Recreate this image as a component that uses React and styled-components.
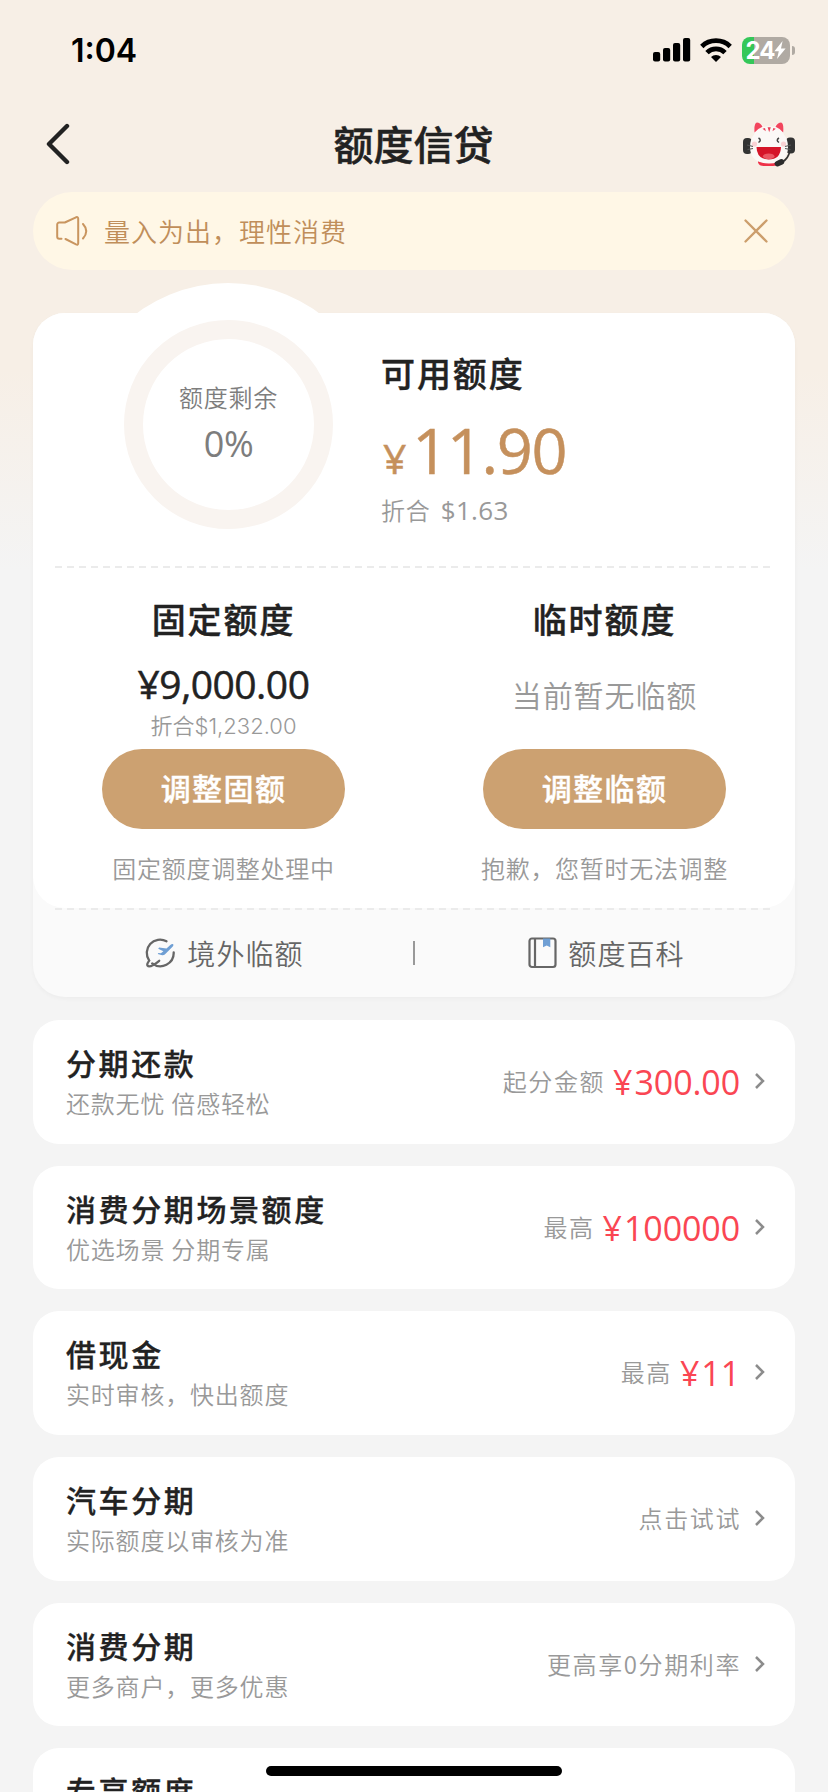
import React from 'react';
import styled, { createGlobalStyle } from 'styled-components';

const products = [
  { title: '分期还款', desc: '还款无忧 倍感轻松', label: '起分金额', amount: '300.00' },
  { title: '消费分期场景额度', desc: '优选场景 分期专属', label: '最高', amount: '100000' },
  { title: '借现金', desc: '实时审核，快出额度', label: '最高', amount: '11' },
  { title: '汽车分期', desc: '实际额度以审核为准', label: '点击试试' },
  { title: '消费分期', desc: '更多商户，更多优惠', label: '更高享0分期利率' },
  { title: '专享额度', desc: '' },
];

const SignalIcon = () => (
  <svg width="38" height="24" viewBox="0 0 38 24">
    <rect x="0" y="14" width="7.2" height="9.5" rx="2" />
    <rect x="10" y="10" width="7.2" height="13.5" rx="2" />
    <rect x="20" y="5" width="7.2" height="18.5" rx="2" />
    <rect x="30" y="0" width="7.2" height="23.5" rx="2" />
  </svg>
);

const WifiIcon = () => (
  <svg width="32" height="24" viewBox="0 0 32 24" fill="none" stroke="#000" strokeWidth="4.8">
    <path d="M1.8 8.4a20.5 20.5 0 0 1 28.4 0" />
    <path d="M7 14.6a12.8 12.8 0 0 1 18 0" />
    <path d="M16 24l-5-5a7 7 0 0 1 10 0z" fill="#000" stroke="none" />
  </svg>
);

const BoltIcon = () => (
  <svg width="12" height="18" viewBox="0 0 12 18" fill="#fff">
    <path d="M8.6 0L0.4 10.2h4.4L3 18 11.6 7.4H7z" />
  </svg>
);

const BackIcon = () => (
  <svg width="24" height="42" viewBox="0 0 24 42" fill="none" stroke="#222" strokeWidth="4.4" strokeLinecap="round" strokeLinejoin="round">
    <path d="M21 3L3 21l18 18" />
  </svg>
);

const CatIcon = () => (
  <svg width="54" height="46" viewBox="0 0 54 46">
    <rect x="2" y="17" width="9" height="16" rx="4" fill="#333" />
    <rect x="45" y="16.500" width="9" height="16" rx="4" fill="#333" />
    <path d="M17 40q10 4 21 0v1.500q-1 3.500-6 3.500h-9q-5 0-6-3.500z" fill="#ee3349" />
    <path d="M13.500 13Q12.500 2 16 1.500 19.500 1.500 23 6q5-1.500 10 0 3.500-4.500 7-4.500 3 .5 2.500 11.500Q47 18 47 26q0 16-19 16.500Q9 42 9 26q0-8 4.500-13z" fill="#fbf8f6" />
    <path d="M13.500 11.500Q12.800 2 16 1.500q3 0 5.500 4.200-5 2-8 5.800zM42.200 11.500Q43 2 40 1.500q-3 0-5.500 4.200 5 2 7.700 5.800z" fill="#f2455d" />
    <path d="M26.600 6.200h3.200l-1.600 5zM21.500 7.800l2.500-.9.800 3.300zM34.800 7.800l-2.500-.9-.8 3.300z" fill="#ec4058" />
    <circle cx="13.500" cy="23" r="2.600" fill="#fad2d4" />
    <circle cx="42.500" cy="23" r="2.600" fill="#fad2d4" />
    <path d="M17.500 17q3.500 2 0 4.500M38 17q-3.500 2 0 4.500" fill="none" stroke="#444" strokeWidth="1.500" />
    <path d="M15.500 26h24.500q-.5 12.500-12.300 12.500T15.500 26z" fill="#d51529" />
    <ellipse cx="27.700" cy="35.300" rx="5.800" ry="2.900" fill="#ea5763" />
    <path d="M6 24l6 1.500M6.500 28.500l5.500-1M50 24l-6 1.500M49.500 28.500l-5.500-1" stroke="#555" strokeWidth="1.100" />
    <path d="M48.500 31q-1 6-7 10" fill="none" stroke="#333" strokeWidth="1.600" />
    <rect x="33.500" y="39" width="10" height="5.600" rx="2.800" fill="#2b2b2b" transform="rotate(-24 38.500 42)" />
  </svg>
);

const SpeakerIcon = () => (
  <svg width="32" height="30" viewBox="0 0 32 30" fill="none" stroke="#c9955f" strokeWidth="2" strokeLinecap="round" strokeLinejoin="round">
    <path d="M5.500 22.800H3.200a2 2 0 0 1-2-2V8.500a2 2 0 0 1 2-2h5.600L20 1.300q2.200-.8 2.200 1.400v24.600q0 2-2.200 1.100L9.500 23" />
    <path d="M27 8q6.500 7 0 14.500" />
  </svg>
);

const CloseIcon = () => (
  <svg width="24" height="24" viewBox="0 0 24 24" stroke="#cc9e6c" strokeWidth="2.300" strokeLinecap="round">
    <path d="M1.500 1.500l21 21M22.500 1.500l-21 21" />
  </svg>
);

const PlanetIcon = () => (
  <svg width="32" height="32" viewBox="0 0 32 32" fill="none" stroke="#666" strokeWidth="2.300" strokeLinecap="round">
    <path d="M21.500 4.300A13.300 13.300 0 0 0 4.200 23.600q-3.400 4.600-1 5.600 3.600.8 11-5.400" />
    <path d="M28.700 15.500A13.300 13.300 0 0 1 7.200 26.400" />
    <path d="M28.300 7.200q-1.600-.4-3 .9l-3.800 3.300-7.400-.8-.9 1.100 5.200 2.500-2.500 2-2.500-.2-.7.900 4.500 1.300q1.400.2 2.600-.8l7.500-7.300q1.500-1.600 1-2.900z" fill="#6f9fd4" stroke="none" />
  </svg>
);

const BookIcon = () => (
  <svg width="30" height="32" viewBox="0 0 30 32" fill="none" stroke="#666" strokeWidth="2.200">
    <rect x="1.500" y="1.500" width="26" height="28.500" rx="2.500" />
    <path d="M7 1.500V30" />
    <path d="M15 1.500h7.300v8.700l-3.600-1.600-3.700 1.600z" fill="#6f9fd4" stroke="none" />
  </svg>
);

const ArrowIcon = () => (
  <svg width="12" height="18" viewBox="0 0 12 18" fill="none" stroke="#8c8c8c" strokeWidth="2.500">
    <path d="M2 2l7 7-7 7" />
  </svg>
);

const QuotaColumn = ({ title, children, action, note }) => (
  <Column>
    <QuotaTitle>{title}</QuotaTitle>
    <QuotaValue>{children}</QuotaValue>
    <ActionButton>{action}</ActionButton>
    <QuotaNote>{note}</QuotaNote>
  </Column>
);

const ProductCard = ({ title, desc, label, amount }) => (
  <Product>
    <div>
      <ProductTitle>{title}</ProductTitle>
      <ProductDesc>{desc}</ProductDesc>
    </div>
    {label && (
      <ProductSide>
        <ProductLabel>{label}</ProductLabel>
        {amount && <ProductAmount><Yen>¥</Yen>{amount}</ProductAmount>}
        <ArrowIcon />
      </ProductSide>
    )}
  </Product>
);

const App = () => (
  <>
    <GlobalStyle />
    <Screen>
      <StatusBar>
        <Time>1:04</Time>
        <StatusIcons>
          <SignalIcon />
          <WifiIcon />
          <BatteryWrap>
            <Battery>24<BoltIcon /></Battery>
            <BatteryTip />
          </BatteryWrap>
        </StatusIcons>
      </StatusBar>

      <NavBar>
        <BackIcon />
        <NavTitle>额度信贷</NavTitle>
        <CatIcon />
      </NavBar>

      <Notice>
        <SpeakerIcon />
        <NoticeText>量入为出，理性消费</NoticeText>
        <CloseIcon />
      </Notice>

      <QuotaCard>
        <QuotaMain>
          <RingBackdrop />
          <Summary>
            <Ring>
              <RingLabel>额度剩余</RingLabel>
              <RingValue>0%</RingValue>
            </Ring>
            <Available>
              <AvailableTitle>可用额度</AvailableTitle>
              <AvailableAmount><small>¥</small>11.90</AvailableAmount>
              <AvailableUsd>折合 <span>$1.63</span></AvailableUsd>
            </Available>
          </Summary>
          <Dashed />
          <Columns>
            <QuotaColumn title="固定额度" action="调整固额" note="固定额度调整处理中">
              <FixedAmount>¥9,000.00</FixedAmount>
              <FixedUsd>折合$1,232.00</FixedUsd>
            </QuotaColumn>
            <QuotaColumn title="临时额度" action="调整临额" note="抱歉，您暂时无法调整">
              <EmptyQuota>当前暂无临额</EmptyQuota>
            </QuotaColumn>
          </Columns>
        </QuotaMain>
        <Dashed />
        <QuotaLinks>
          <QuotaLink><PlanetIcon />境外临额</QuotaLink>
          <Divider />
          <QuotaLink><BookIcon />额度百科</QuotaLink>
        </QuotaLinks>
      </QuotaCard>

      <ProductList>
        {products.map((item) => (
          <ProductCard key={item.title} {...item} />
        ))}
      </ProductList>
      <HomeIndicator />
    </Screen>
  </>
);

export default App;

// Styled-components
const GlobalStyle = createGlobalStyle`
  * {
    box-sizing: border-box;
  }

  body {
    margin: 0;
    font-family: 'Noto Sans CJK SC', sans-serif;
    color: #222;
  }

  svg {
    display: block;
    flex-shrink: 0;
  }
`;

const Screen = styled.div`
  position: relative;
  width: 828px;
  height: 1792px;
  padding: 0 33px;
  overflow: hidden;
  background: linear-gradient(#f7efe6 0, #f7efe6 370px, #f4f4f4 570px);
`;

const StatusBar = styled.div`
  display: flex;
  align-items: center;
  justify-content: space-between;
  height: 100px;
  padding: 0 0 0 38px;
`;

const Time = styled.span`
  padding-top: 1px;
  color: #000;
  font: 600 32px/36px Inter, sans-serif;
`;

const StatusIcons = styled.div`
  display: flex;
  align-items: center;
  gap: 9px;
`;

const BatteryWrap = styled.div`
  display: flex;
  align-items: center;
  gap: 2px;
  margin-left: 1px;
`;

const Battery = styled.div`
  display: flex;
  align-items: center;
  justify-content: center;
  width: 48px;
  height: 27px;
  border-radius: 8px;
  background: linear-gradient(90deg, #34c759 12px, #b0aaa3 12px);
  color: #fff;
  font: 700 24px/27px Inter, sans-serif;
  letter-spacing: -1px;
`;

const BatteryTip = styled.div`
  width: 3px;
  height: 9px;
  border-radius: 0 4px 4px 0;
  background: #b0aaa3;
`;

const NavBar = styled.div`
  display: flex;
  align-items: center;
  justify-content: space-between;
  height: 92px;
  padding: 0 0 4px 13px;
`;

const NavTitle = styled.h1`
  margin: 0 0 3px 16px;
  font-size: 40px;
  font-weight: 500;
  line-height: 48px;
  -webkit-text-stroke: 0.5px #222;
`;

const Notice = styled.div`
  display: flex;
  align-items: center;
  height: 78px;
  padding: 0 27px 0 23px;
  border-radius: 39px;
  background: #fff7e6;
`;

const NoticeText = styled.span`
  flex: 1;
  margin-left: 16px;
  padding-bottom: 2px;
  color: #c08e5a;
  font-size: 26px;
  font-weight: 350;
  letter-spacing: 1px;
`;

const QuotaCard = styled.section`
  height: 684px;
  margin-top: 43px;
  border-radius: 32px;
  background: #fafafa;
  box-shadow: 0 2px 4px rgba(0, 0, 0, 0.03);
`;

const QuotaMain = styled.div`
  position: relative;
  height: 595px;
  border-radius: 32px;
  background: #fff;
`;

// only the cap of this circle shows above the card edge
const RingBackdrop = styled.div`
  position: absolute;
  top: -30px;
  left: 42px;
  width: 306px;
  height: 306px;
  border-radius: 50%;
  background: #fff;
  clip-path: inset(0 0 200px 0);
`;

const Summary = styled.div`
  position: relative;
  display: flex;
  height: 253px;
  padding: 7px 0 0 91px;
`;

const Ring = styled.div`
  display: flex;
  flex-direction: column;
  align-items: center;
  width: 209px;
  height: 209px;
  padding-top: 41px;
  border: 19px solid #f9f4f0;
  border-radius: 50%;
  color: #7d7d7d;
`;

const RingLabel = styled.div`
  font-size: 24px;
  font-weight: 350;
  line-height: 34px;
  letter-spacing: 0.8px;
`;

const RingValue = styled.div`
  font: 400 36px/40px 'Open Sans', sans-serif;
  margin-top: 10px;
  letter-spacing: -0.5px;
`;

const Available = styled.div`
  margin-left: 48px;
  padding-top: 28px;
`;

const AvailableTitle = styled.div`
  font-size: 34px;
  font-weight: 500;
  line-height: 50px;
  letter-spacing: 1.9px;
  -webkit-text-stroke: 0.4px #222;
`;

const AvailableAmount = styled.div`
  display: flex;
  align-items: baseline;
  margin: 17px 0 0 2px;
  color: #c5905c;
  font: 500 63px/70px 'Open Sans', sans-serif;
  letter-spacing: -1.3px;
  -webkit-text-stroke: 0.5px #c5905c;

  small {
    margin-right: 7px;
    font-size: 41px;
  }
`;

const AvailableUsd = styled.div`
  color: #999;
  font-size: 24px;
  font-weight: 350;
  line-height: 34px;
  letter-spacing: 0.8px;

  span {
    margin-left: 4px;
    font-family: 'Open Sans', sans-serif;
    font-size: 26px;
    font-weight: 400;
    letter-spacing: 0.3px;
  }
`;

const Dashed = styled.div`
  height: 2px;
  margin: 0 22px;
  background: repeating-linear-gradient(90deg, #ebebeb 0, #ebebeb 7px, transparent 7px, transparent 12px);
`;

const Columns = styled.div`
  display: flex;
`;

const Column = styled.div`
  flex: 1;
  display: flex;
  flex-direction: column;
  align-items: center;
  padding-top: 26px;
`;

const QuotaTitle = styled.div`
  font-size: 34px;
  font-weight: 500;
  line-height: 50px;
  letter-spacing: 1.9px;
  -webkit-text-stroke: 0.4px #222;
`;

const QuotaValue = styled.div`
  display: flex;
  flex-direction: column;
  align-items: center;
  height: 105px;
  padding-top: 17px;
`;

const FixedAmount = styled.div`
  font: 500 39px/46px 'Open Sans', sans-serif;
  letter-spacing: -0.5px;
  -webkit-text-stroke: 0.5px #222;
`;

const FixedUsd = styled.div`
  margin-top: 3px;
  color: #999;
  font: 350 22px/32px Inter, 'Noto Sans CJK SC', sans-serif;
`;

const EmptyQuota = styled.div`
  margin-top: 11px;
  color: #999;
  font-size: 30px;
  font-weight: 350;
  line-height: 44px;
  letter-spacing: 0.9px;
`;

const ActionButton = styled.button`
  width: 243px;
  height: 80px;
  padding: 0 0 5px;
  border: none;
  border-radius: 40px;
  background: #cca171;
  color: #fff;
  font-family: inherit;
  font-size: 30px;
  font-weight: 500;
  letter-spacing: 1.4px;
  -webkit-text-stroke: 0.4px #fff;
`;

const QuotaNote = styled.div`
  margin-top: 22px;
  color: #999;
  font-size: 24px;
  font-weight: 350;
  line-height: 34px;
  letter-spacing: 0.7px;
`;

const QuotaLinks = styled.div`
  display: flex;
  align-items: center;
  height: 86px;
`;

const QuotaLink = styled.div`
  flex: 1;
  display: flex;
  align-items: center;
  justify-content: center;
  gap: 10px;
  padding-left: 3px;
  color: #666;
  font-size: 28px;
  font-weight: 350;
  letter-spacing: 1.1px;
`;

const Divider = styled.div`
  width: 2px;
  height: 24px;
  background: #999;
`;

const ProductList = styled.div`
  display: flex;
  flex-direction: column;
  gap: 22px;
  margin-top: 23px;
`;

const Product = styled.div`
  display: flex;
  flex-shrink: 0;
  justify-content: space-between;
  height: 123.7px;
  padding: 20px 29px 0 33px;
  border-radius: 26px;
  background: #fff;
`;

const ProductTitle = styled.div`
  font-size: 30px;
  font-weight: 500;
  line-height: 44px;
  letter-spacing: 2.6px;
  -webkit-text-stroke: 0.3px #222;
`;

const ProductDesc = styled.div`
  margin-top: 1px;
  color: #999;
  font-size: 24px;
  font-weight: 350;
  line-height: 36px;
  letter-spacing: 0.8px;
`;

const ProductSide = styled.div`
  display: flex;
  align-items: center;
  height: 82px;
`;

const ProductLabel = styled.span`
  color: #999;
  font-size: 24px;
  font-weight: 350;
  letter-spacing: 1.6px;
  margin-right: 8px;
  padding-bottom: 1px;

  &:nth-last-child(2) {
    margin-right: 13px;
  }
`;

const ProductAmount = styled.span`
  color: #fa4653;
  font: 400 34px/40px 'Open Sans', sans-serif;
  letter-spacing: -0.1px;
  margin-right: 14px;
  padding-top: 2px;
`;

const Yen = styled.span`
  margin-right: 2px;
`;

const HomeIndicator = styled.div`
  position: absolute;
  bottom: 16px;
  left: 266px;
  width: 296px;
  height: 10px;
  border-radius: 5px;
  background: #000;
`;
